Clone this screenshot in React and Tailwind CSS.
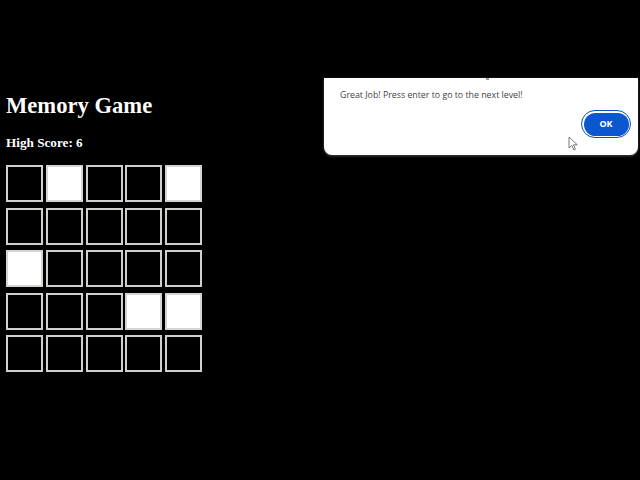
import React from 'react';

const board = [
  [0, 1, 0, 0, 1],
  [0, 0, 0, 0, 0],
  [1, 0, 0, 0, 0],
  [0, 0, 0, 1, 1],
  [0, 0, 0, 0, 0],
];

export default function App() {
  return (
    <div className="relative w-[640px] h-[480px] bg-black overflow-hidden">
      {/* game page */}
      <div className="pt-[93px] pl-[6px] flex flex-col text-white" style={{ fontFamily: '"Liberation Serif", "Times New Roman", serif' }}>
        <h1 className="text-[22.6px] leading-[26px] font-bold">Memory Game</h1>
        <h3 className="mt-[16px] text-[13.2px] leading-[15px] font-bold">High Score: 6</h3>
        <div className="mt-[15px] grid grid-cols-[repeat(5,37px)] gap-x-[2.75px] gap-y-[5.6px] w-max">
          {board.flat().map((on, i) => (
            <div
              key={i}
              className={
                on
                  ? 'w-[37px] h-[37px] border-2 border-[#d4d4d0] bg-white'
                  : 'w-[37px] h-[37px] border-2 border-[#cfcfcb] bg-black'
              }
            />
          ))}
        </div>
      </div>

      {/* alert dialog */}
      <div
        className="absolute left-[324px] top-[78px] w-[314px] h-[77px] bg-white rounded-b-[8px] shadow-[0_1px_3px_rgba(120,120,120,0.6)]"
        style={{ fontFamily: '"Open Sans", "Noto Sans", sans-serif' }}
      >
        <div className="absolute left-[162px] top-0 w-[3px] h-[2px] bg-[#9a9a9a]" />
        <div className="pl-[16px] pt-[11px] text-[8.8px] leading-[13px] text-[#3f3f3f]">
          Great Job! Press enter to go to the next level!
        </div>
        <div className="absolute left-[257px] top-[32px] w-[50px] h-[28px] rounded-full border-[1.5px] border-[#0b4fb4] p-[1.5px] bg-white">
          <div className="w-full h-full rounded-full bg-[#0b57d0] flex items-center justify-center text-white text-[9px] font-bold">
            OK
          </div>
        </div>
      </div>

      {/* mouse pointer */}
      <svg className="absolute left-[568px] top-[136px]" width="11" height="15" viewBox="0 0 11 15">
        <path d="M1 1 L1 12 L3.8 9.4 L5.8 14 L7.4 13.3 L5.5 8.8 L9.3 8.8 Z" fill="white" stroke="#6b6b6b" strokeWidth="0.9" strokeLinejoin="round" />
      </svg>
    </div>
  );
}
